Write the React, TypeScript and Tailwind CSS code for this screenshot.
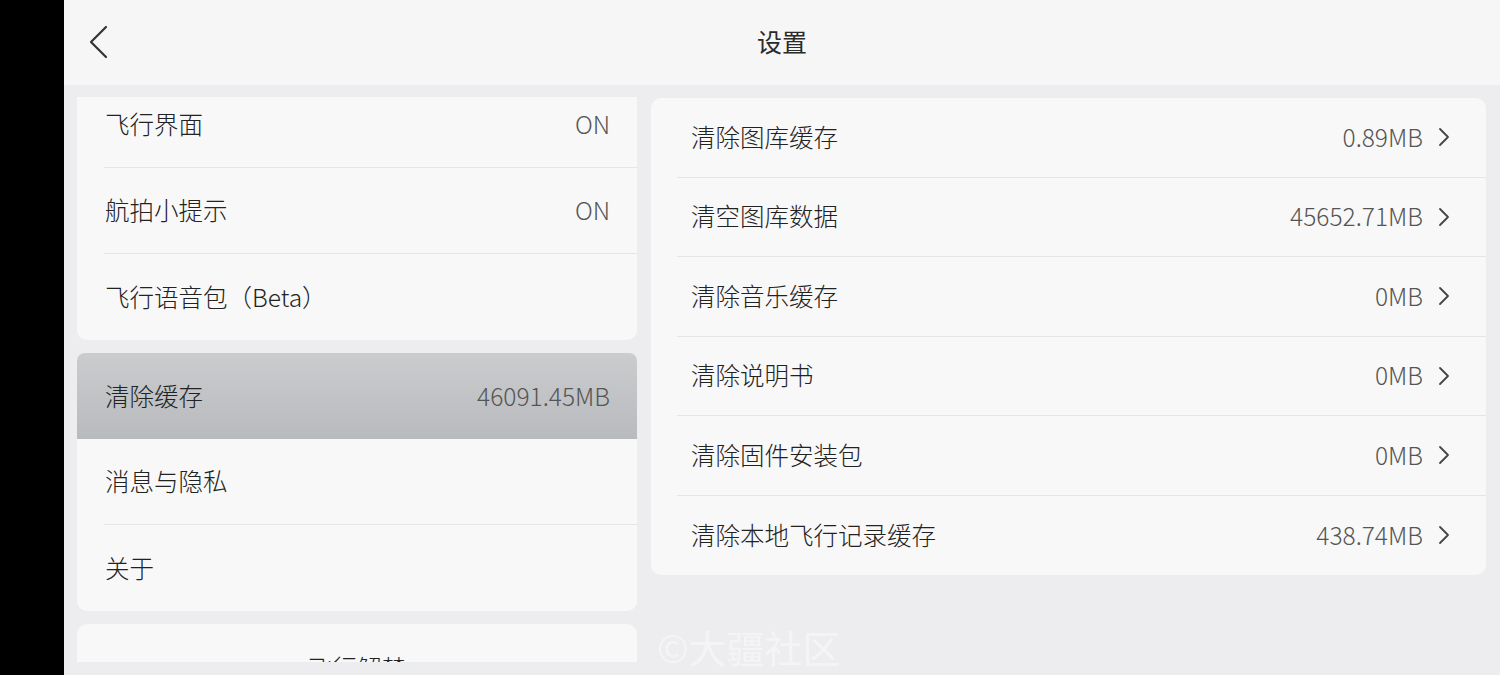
const font = { fontFamily: '"Noto Sans CJK SC", "Noto Sans", sans-serif' }

const cacheItems = [
  { label: '清除图库缓存', value: '0.89MB' },
  { label: '清空图库数据', value: '45652.71MB' },
  { label: '清除音乐缓存', value: '0MB' },
  { label: '清除说明书', value: '0MB' },
  { label: '清除固件安装包', value: '0MB' },
  { label: '清除本地飞行记录缓存', value: '438.74MB' },
]

function Chevron({ dir }: { dir: 'left' | 'right' }) {
  if (dir === 'left') {
    return (
      <svg width="20" height="34" viewBox="0 0 20 34" fill="none" stroke="#333" strokeWidth="2.2" strokeLinecap="round" strokeLinejoin="round">
        <polyline points="17,2 2,17 17,32" />
      </svg>
    )
  }
  return (
    <svg width="12" height="20" viewBox="0 0 12 20" fill="none" stroke="#444" strokeWidth="1.8" strokeLinecap="round" strokeLinejoin="round">
      <polyline points="2,2 10,10 2,18" />
    </svg>
  )
}

function LeftRow({ label, value, divider = true, active = false }: { label: string; value?: string; divider?: boolean; active?: boolean }) {
  return (
    <div className={active ? 'h-[86px] bg-gradient-to-b from-[#caccce] to-[#b8babd] rounded-t-[8px]' : 'h-[86px]'}>
      <div className={`h-full ml-[27px] pr-[27px] flex items-center justify-between ${divider ? 'border-b border-[#e5e5e7]' : ''}`}>
        <span className="text-[24.5px] font-light text-[#222] pl-[1px]">{label}</span>
        {value && <span className="text-[24.5px] font-light text-[#555]">{value}</span>}
      </div>
    </div>
  )
}

export default function App() {
  return (
    <div className="w-[1500px] h-[675px] flex bg-black overflow-hidden" style={font}>
      <div className="w-[64px] shrink-0 bg-black" />

      <div className="flex-1 flex flex-col bg-[#ededef] relative">
        {/* 顶部栏 */}
        <div className="h-[85px] shrink-0 bg-[#f6f6f6] flex items-center relative">
          <div className="ml-[25px] -mt-[2px]">
            <Chevron dir="left" />
          </div>
          <div className="absolute inset-x-0 -mt-[2px] text-center text-[25px] text-[#2a2a2a]">设置</div>
        </div>

        <div className="flex gap-[14px] pl-[13px] pr-[14px] pt-[12px]">
          {/* 左侧列表 */}
          <div className="w-[560px] h-[565px] overflow-hidden flex flex-col gap-[13px]">
            <div className="bg-[#f8f8f8] rounded-b-[10px] -mt-[15px]">
              <LeftRow label="飞行界面" value="ON" />
              <LeftRow label="航拍小提示" value="ON" />
              <LeftRow label="飞行语音包（Beta）" divider={false} />
            </div>
            <div className="bg-[#f8f8f8] rounded-[10px]">
              <LeftRow label="清除缓存" value="46091.45MB" divider={false} active />
              <LeftRow label="消息与隐私" />
              <LeftRow label="关于" divider={false} />
            </div>
            <div className="bg-[#f8f8f8] rounded-[10px] shrink-0 h-[120px] pt-[26px] text-center text-[24.5px] font-light text-[#222]">
              飞行解禁
            </div>
          </div>

          {/* 右侧缓存详情 */}
          <div className="w-[835px] self-start bg-[#f8f8f8] rounded-[10px] mt-[1px]">
            {cacheItems.map((item, i) => (
              <div key={item.label} className="h-[79.5px] pl-[26px]">
                <div className={`h-full flex items-center justify-between pl-[14px] pr-[36px] ${i < cacheItems.length - 1 ? 'border-b border-[#e5e5e7]' : ''}`}>
                  <span className="text-[24.5px] font-light text-[#222]">{item.label}</span>
                  <div className="flex items-center gap-[15px]">
                    <span className="text-[24.5px] font-light text-[#555]">{item.value}</span>
                    <Chevron dir="right" />
                  </div>
                </div>
              </div>
            ))}
          </div>
        </div>

        {/* 水印 */}
        <div className="absolute left-[593px] top-[628px] text-[38px] leading-none text-white/45 pointer-events-none">©大疆社区</div>
      </div>
    </div>
  )
}
